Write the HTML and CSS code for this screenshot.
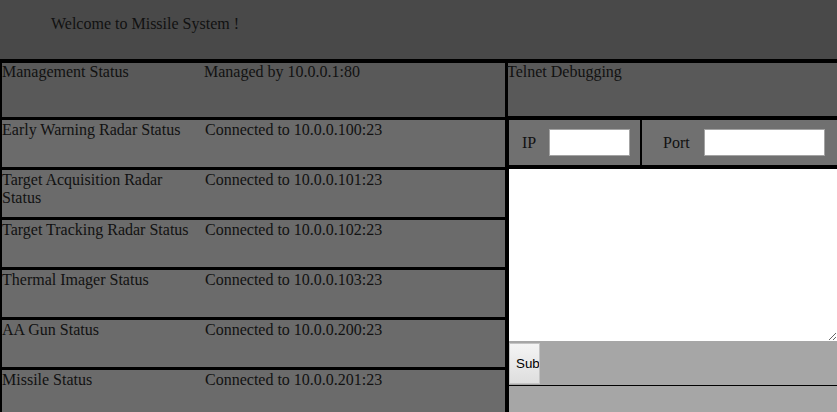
FILE: index.html
```html
<!DOCTYPE html>
<html>
<head>
<meta charset="utf-8">
<link rel="stylesheet" href="styles.css">
</head>
<body>
<div class="header">Welcome to Missile System !</div>
<div class="main">
  <div class="left">
    <div class="row row-head">
      <div class="name">Management Status</div>
      <div class="value">Managed by 10.0.0.1:80</div>
    </div>
    <div class="row">
      <div class="name">Early Warning Radar Status</div>
      <div class="value">Connected to 10.0.0.100:23</div>
    </div>
    <div class="row">
      <div class="name">Target Acquisition Radar Status</div>
      <div class="value">Connected to 10.0.0.101:23</div>
    </div>
    <div class="row">
      <div class="name">Target Tracking Radar Status</div>
      <div class="value">Connected to 10.0.0.102:23</div>
    </div>
    <div class="row">
      <div class="name">Thermal Imager Status</div>
      <div class="value">Connected to 10.0.0.103:23</div>
    </div>
    <div class="row">
      <div class="name">AA Gun Status</div>
      <div class="value">Connected to 10.0.0.200:23</div>
    </div>
    <div class="row">
      <div class="name">Missile Status</div>
      <div class="value">Connected to 10.0.0.201:23</div>
    </div>
  </div>
  <div class="right">
    <div class="telnet-title">Telnet Debugging</div>
    <div class="lower">
      <div class="conn">
        <div class="conn-cell ip-cell">
          <span class="label">IP</span>
          <input class="ip-input" type="text">
        </div>
        <div class="conn-cell port-cell">
          <span class="label">Port</span>
          <input class="port-input" type="text">
        </div>
      </div>
      <textarea class="console"></textarea>
      <div class="submit-row">
        <button class="submit">Submit</button>
      </div>
      <div class="output"></div>
    </div>
  </div>
</div>
</body>
</html>
```

FILE: styles.css
```css
html, body {
  margin: 0;
  padding: 0;
}
body {
  width: 837px;
  height: 412px;
  overflow: hidden;
  background: #a6a6a6;
  font-family: "Liberation Serif", "Times New Roman", serif;
  font-size: 16px;
  color: #111;
}
.header {
  height: 59px;
  box-sizing: border-box;
  padding: 15px 0 0 51px;
  background: #494949;
}
.main {
  display: flex;
  border-top: 4px solid #000;
  height: 349px;
}
.left {
  width: 503px;
  flex: none;
  border-left: 2px solid #000;
  border-right: 3px solid #000;
  background: #6b6b6b;
}
.row {
  display: grid;
  grid-template-columns: 203px 1fr;
  height: 46px;
  border-bottom: 3px solid #000;
  background: #6b6b6b;
  padding-top: 1px;
  box-sizing: content-box;
}
.row-head {
  height: 54px;
  padding-top: 0;
  grid-template-columns: 202px 1fr;
  background: #595959;
}
.name {
  padding-right: 6px;
}
.right {
  flex: 1;
  display: flex;
  flex-direction: column;
  background: #a6a6a6;
}
.telnet-title {
  height: 53px;
  background: #595959;
  border-bottom: 4px solid #000;
  flex: none;
  text-indent: -1px;
}
.lower {
  flex: 1;
  display: flex;
  flex-direction: column;
  border-left: 1px solid #000;
}
.conn {
  display: flex;
  height: 45px;
  background: #707070;
  border-bottom: 4px solid #000;
  flex: none;
}
.conn-cell {
  display: flex;
  align-items: center;
}
.ip-cell {
  width: 133px;
  padding-left: 13px;
  box-sizing: border-box;
  border-right: 2px solid #000;
  gap: 13px;
}
.port-cell {
  flex: 1;
  padding-left: 21px;
  gap: 14px;
}
.conn-cell input {
  height: 27px;
  box-sizing: border-box;
  border: 1px solid #a3a3a3;
  background: #fff;
  padding: 0;
  margin: 0;
}
.ip-input {
  width: 81px;
}
.port-input {
  width: 121px;
}
.console {
  display: block;
  height: 172px;
  width: 100%;
  box-sizing: border-box;
  border: none;
  margin: 0;
  padding: 0;
  background: #fff;
  flex: none;
}
.submit-row {
  height: 44px;
  display: flex;
  align-items: center;
  border-bottom: 1px solid #000;
  flex: none;
}
.submit {
  width: 31px;
  height: 41px;
  padding: 0 0 0 6px;
  margin: 0;
  text-align: left;
  overflow: hidden;
  white-space: nowrap;
  font-family: "Liberation Sans", Arial, sans-serif;
  font-size: 13.33px;
  color: #000;
  border: 1px solid #c4c4c4;
  background: linear-gradient(#f4f4f4, #dedede);
  box-sizing: border-box;
}
.output {
  flex: 1;
  background: #a6a6a6;
}
```
